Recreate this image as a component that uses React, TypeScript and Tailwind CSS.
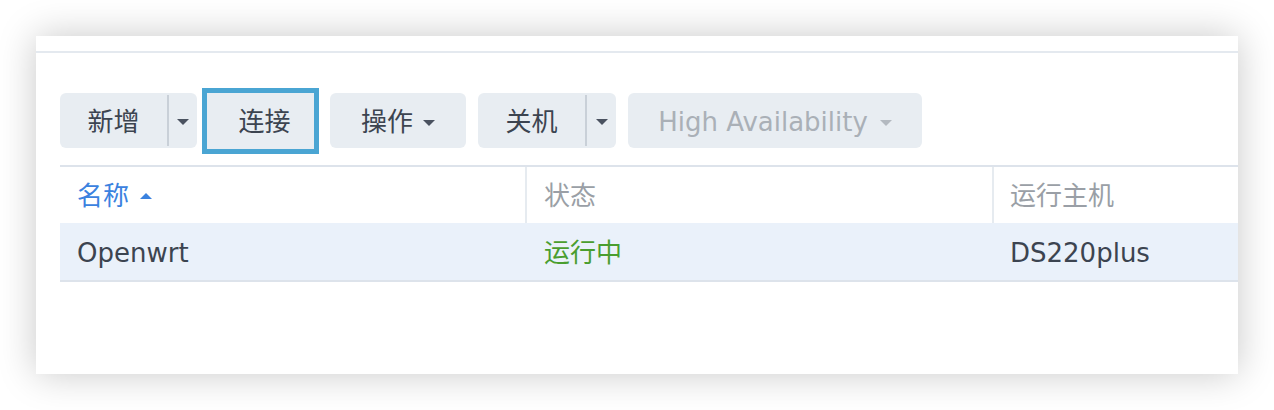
import React from 'react'

const Caret = ({ color = '#4a5260' }: { color?: string }) => (
    <svg width="12" height="6" viewBox="0 0 12 6" className="shrink-0">
        <path d="M0 0 L12 0 L6 6 Z" fill={color} />
    </svg>
)

const font = "font-['DejaVu_Sans','Noto_Sans_CJK_SC',sans-serif]"

const App = () => {
    return (
        <div className={`w-[1274px] h-[410px] bg-white pt-9 pl-9 ${font}`}>
            <div className="w-[1202px] h-[338px] bg-white shadow-[0_0_36px_rgba(0,0,0,0.22)] overflow-hidden">
                {/* top strip */}
                <div className="h-[15px] border-b-2 border-[#e4e9ef] box-content" />

                {/* Toolbar */}
                <div className="flex items-center pl-6 mt-[40px] h-[55px] text-[26px] text-[#3c4450]">
                    <div className="flex items-stretch w-[137px] h-[55px] bg-[#e8edf2] rounded-md">
                        <div className="w-[107px] flex items-center justify-center pt-1">新增</div>
                        <div className="w-[2px] my-[2px] bg-[#c9d0d8]" />
                        <div className="flex-1 flex items-center justify-center pt-[3px]">
                            <Caret />
                        </div>
                    </div>

                    <div className="ml-[5px] w-[117px] h-[66px] border-[5px] border-[#4aa5d3] bg-[#e8edf2] flex items-center justify-center pl-[8px] pt-1">
                        连接
                    </div>

                    <div className="ml-[11px] w-[136px] h-[55px] bg-[#e8edf2] rounded-md flex items-center justify-center gap-[10px] pt-1">
                        <span>操作</span>
                        <Caret />
                    </div>

                    <div className="ml-3 flex items-stretch w-[138px] h-[55px] bg-[#e8edf2] rounded-md">
                        <div className="w-[107px] flex items-center justify-center pt-1">关机</div>
                        <div className="w-[2px] my-[2px] bg-[#c9d0d8]" />
                        <div className="flex-1 flex items-center justify-center pt-[3px]">
                            <Caret />
                        </div>
                    </div>

                    <div className="ml-3 w-[294px] h-[55px] bg-[#e8edf2] rounded-md flex items-center justify-center gap-[12px] text-[#aab0b7] pt-1">
                        <span>High Availability</span>
                        <Caret color="#b3b9c0" />
                    </div>
                </div>

                {/* Table */}
                <div className="ml-6 mt-[17px] text-[26px]">
                    <div className="flex h-[58px] border-t-2 border-[#dde3eb]">
                        <div className="w-[465px] flex items-center pl-[17px] gap-[11px] text-[#3b82df] pt-[2px]">
                            <span>名称</span>
                            <svg width="12" height="6" viewBox="0 0 12 6">
                                <path d="M0 6 L12 6 L6 0 Z" fill="#3b82df" />
                            </svg>
                        </div>
                        <div className="w-[467px] flex items-center pl-[17px] border-l-2 border-[#e6ebf0] text-[#9a9fa6] pt-[2px]">
                            状态
                        </div>
                        <div className="flex-1 flex items-center pl-[16px] border-l-2 border-[#e6ebf0] text-[#9a9fa6] pt-[2px]">
                            运行主机
                        </div>
                    </div>
                    <div className="flex h-[59px] bg-[#eaf1fa] border-b-2 border-[#dde3eb]">
                        <div className="w-[465px] flex items-center pl-[17px] text-[#3c4450] pt-1">Openwrt</div>
                        <div className="w-[467px] flex items-center pl-[19px] text-[#4a9e2f] pt-1">运行中</div>
                        <div className="flex-1 flex items-center pl-[18px] text-[#3c4450] pt-1">DS220plus</div>
                    </div>
                </div>
            </div>
        </div>
    )
}

export default App
